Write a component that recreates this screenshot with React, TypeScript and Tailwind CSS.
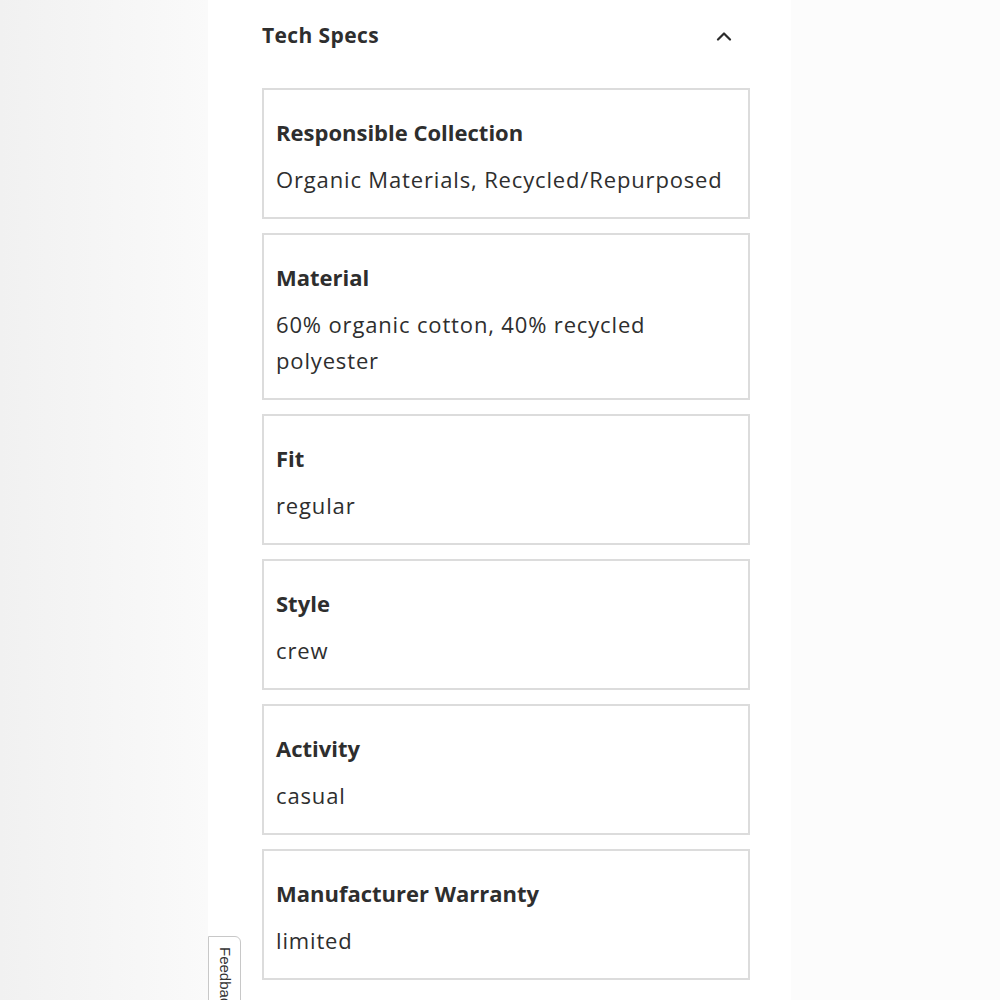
import React from "react";

type Spec = { label: string; lines: string[] };

const specs: Spec[] = [
    { label: "Responsible Collection", lines: ["Organic Materials, Recycled/Repurposed"] },
    { label: "Material", lines: ["60% organic cotton, 40% recycled", "polyester"] },
    { label: "Fit", lines: ["regular"] },
    { label: "Style", lines: ["crew"] },
    { label: "Activity", lines: ["casual"] },
    { label: "Manufacturer Warranty", lines: ["limited"] },
];

const ChevronUp = () => (
    <svg width="16" height="10" viewBox="0 0 16 10" fill="none">
        <path d="M2 8.5 L8 2.5 L14 8.5" stroke="#2b2b2b" strokeWidth="2.2" strokeLinecap="round" strokeLinejoin="round" />
    </svg>
);

export default function App() {
    return (
        <div className="relative flex h-[1000px] w-full overflow-hidden" style={{ fontFamily: "'Open Sans', 'Noto Sans', sans-serif" }}>
            {/* Left backdrop */}
            <div className="w-[208px] shrink-0 bg-gradient-to-r from-[#f1f1f1] to-[#fafafa]" />

            {/* Tech specs column */}
            <div className="w-[583px] shrink-0 bg-white pl-[54px] pr-[41px] text-[#2e2e2e]">
                <div className="flex items-center justify-between h-[72px] pr-[18px]">
                    <h2 className="text-[21px] font-bold tracking-[0.4px]">Tech Specs</h2>
                    <ChevronUp />
                </div>

                <div className="mt-[16px] flex flex-col gap-[14px]">
                    {specs.map((spec) => (
                        <div key={spec.label} className="border-2 border-[#dcdcdc] px-[12px] pt-[26px] pb-[20px]">
                            <p className="text-[22px] font-bold leading-[32px]">{spec.label}</p>
                            <div className="mt-[13px] text-[22px] leading-[36px] tracking-[0.85px] whitespace-nowrap">
                                {spec.lines.map((line) => (
                                    <p key={line}>{line}</p>
                                ))}
                            </div>
                        </div>
                    ))}
                </div>
            </div>

            {/* Right backdrop */}
            <div className="flex-1 bg-[#fcfcfc]" />

            {/* Feedback tab */}
            <div className="absolute left-[208px] top-[936px] w-[33px] h-[80px] bg-white border border-[#c8c8c8] rounded-tr-[6px] flex justify-center pt-[10px]">
                <span
                    className="text-[15px] text-[#333] [writing-mode:vertical-rl]"
                    style={{ fontFamily: "'Liberation Sans', Arial, sans-serif" }}
                >
                    Feedback
                </span>
            </div>
        </div>
    );
}
